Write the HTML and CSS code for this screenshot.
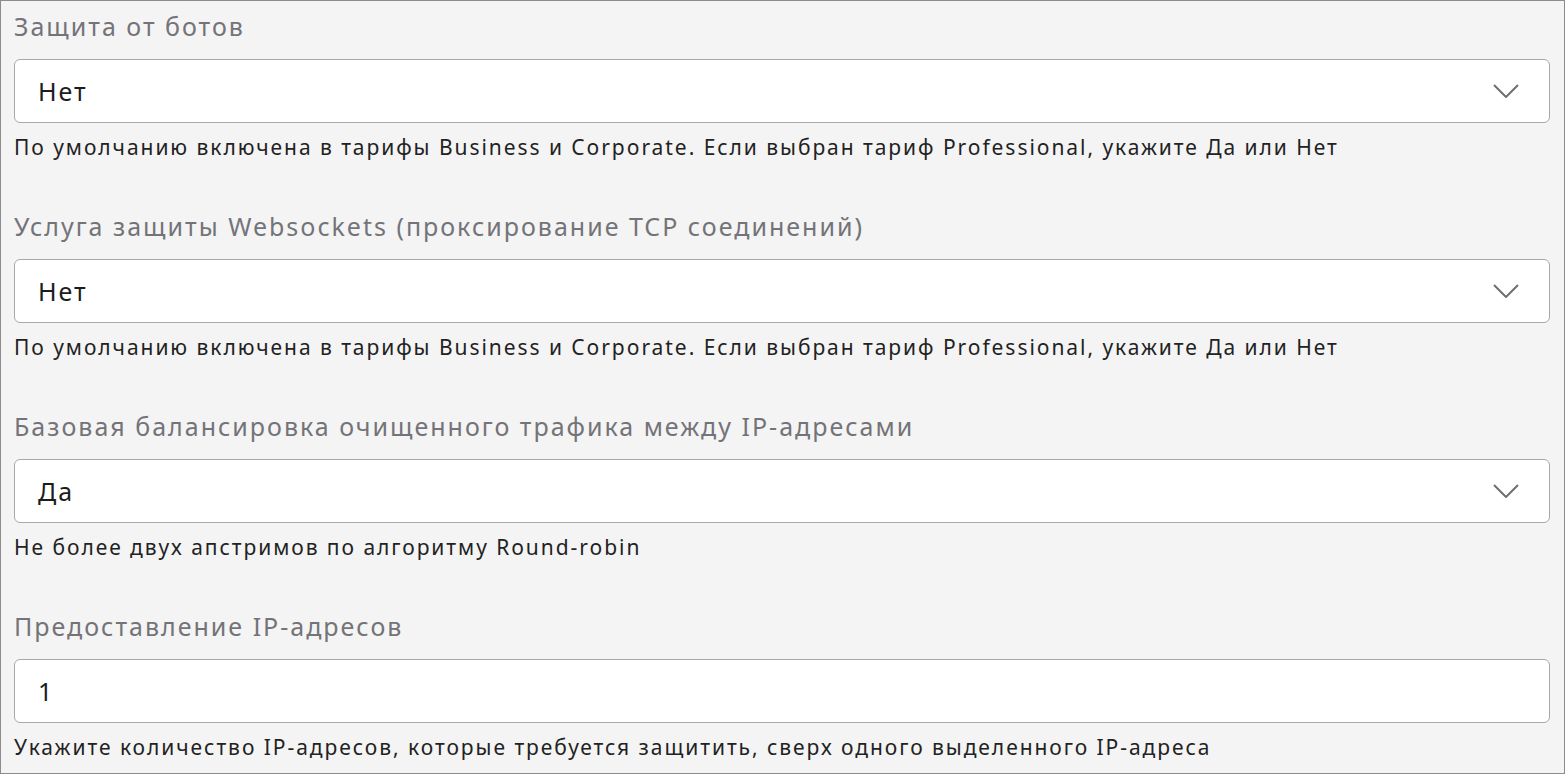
FILE: index.html
```html
<!DOCTYPE html>
<html lang="ru">
<head>
<meta charset="utf-8">
<link rel="stylesheet" href="styles.css">
</head>
<body>
<div class="panel">
  <div class="field">
    <div class="label">Защита от ботов</div>
    <div class="control">
      <span class="value">Нет</span>
      <svg class="chev" width="26" height="14" viewBox="0 0 26 14"><path d="M1 1 L13 13 L25 1" fill="none" stroke="#6f6f73" stroke-width="2"/></svg>
    </div>
    <div class="hint">По умолчанию включена в тарифы Business и Corporate. Если выбран тариф Professional, укажите Да или Нет</div>
  </div>
  <div class="field">
    <div class="label">Услуга защиты Websockets (проксирование TCP соединений)</div>
    <div class="control">
      <span class="value">Нет</span>
      <svg class="chev" width="26" height="14" viewBox="0 0 26 14"><path d="M1 1 L13 13 L25 1" fill="none" stroke="#6f6f73" stroke-width="2"/></svg>
    </div>
    <div class="hint">По умолчанию включена в тарифы Business и Corporate. Если выбран тариф Professional, укажите Да или Нет</div>
  </div>
  <div class="field">
    <div class="label">Базовая балансировка очищенного трафика между IP-адресами</div>
    <div class="control">
      <span class="value">Да</span>
      <svg class="chev" width="26" height="14" viewBox="0 0 26 14"><path d="M1 1 L13 13 L25 1" fill="none" stroke="#6f6f73" stroke-width="2"/></svg>
    </div>
    <div class="hint">Не более двух апстримов по алгоритму Round-robin</div>
  </div>
  <div class="field">
    <div class="label">Предоставление IP-адресов</div>
    <div class="control">
      <span class="value">1</span>
    </div>
    <div class="hint">Укажите количество IP-адресов, которые требуется защитить, сверх одного выделенного IP-адреса</div>
  </div>
</div>
</body>
</html>
```
FILE: styles.css
```css
html, body {
  margin: 0;
  padding: 0;
}
body {
  font-family: "Noto Sans", "Open Sans", sans-serif;
  background: #f4f4f4;
}
.panel {
  box-sizing: border-box;
  width: 1565px;
  height: 774px;
  border: 1px solid #8c8c8c;
  background: #f4f4f4;
  padding: 9px 14px 0 13px;
  display: flex;
  flex-direction: column;
  gap: 49px;
}
.field {
  display: flex;
  flex-direction: column;
}
.label {
  font-size: 25px;
  line-height: 32px;
  letter-spacing: 2px;
  color: #737378;
}
.control {
  margin-top: 17px;
  box-sizing: border-box;
  height: 64px;
  background: #fff;
  border: 1px solid #a8a8a8;
  border-radius: 6px;
  display: flex;
  align-items: center;
  justify-content: space-between;
  padding: 0 30px 0 23px;
}
.value {
  font-size: 25px;
  letter-spacing: 2px;
  color: #1c1c1c;
}
.chev {
  display: block;
}
.hint {
  margin-top: 10px;
  font-size: 21px;
  line-height: 28px;
  letter-spacing: 1.95px;
  color: #222;
}
```
